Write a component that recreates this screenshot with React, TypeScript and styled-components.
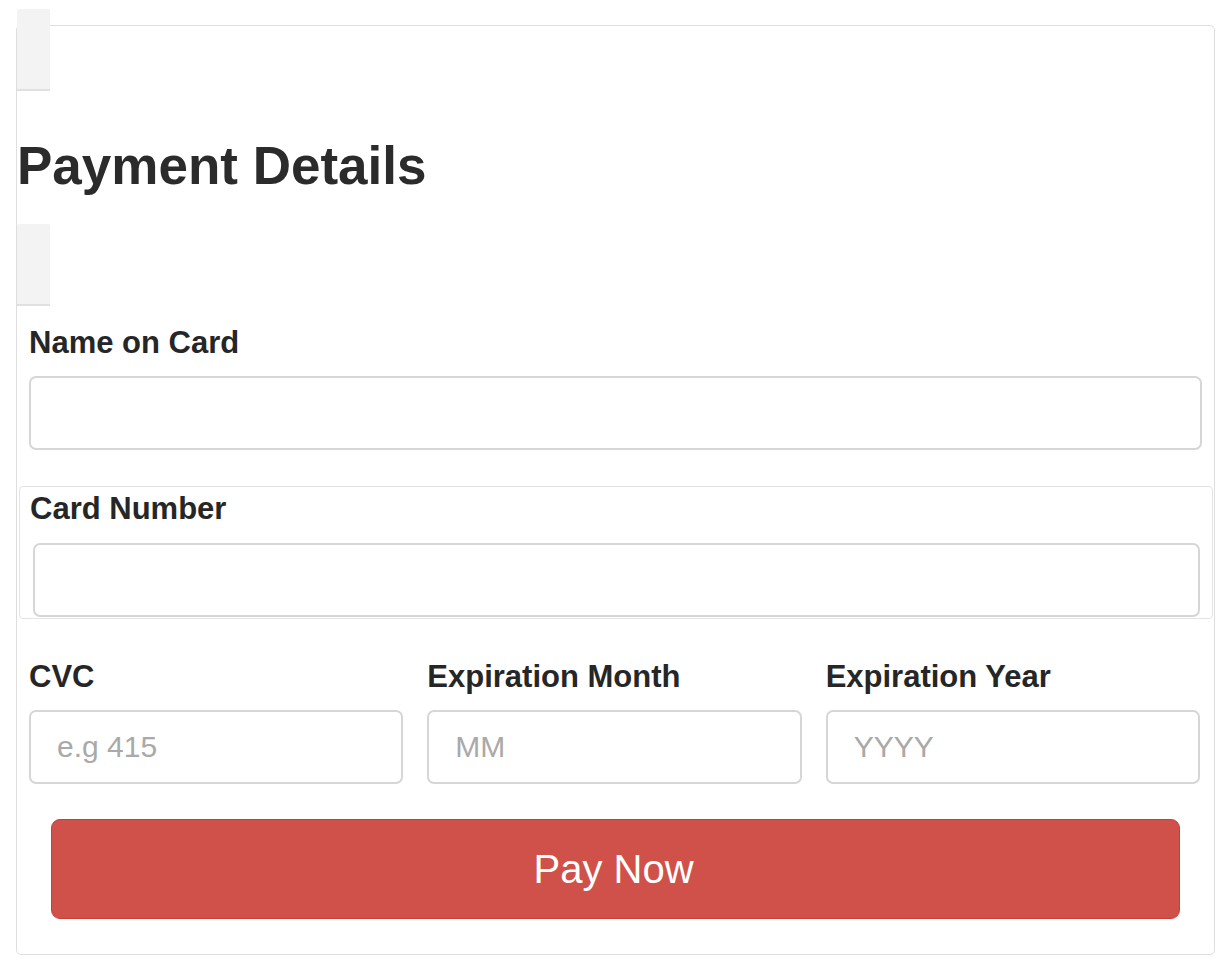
import React from "react";
import styled, { createGlobalStyle } from "styled-components";

const Global = createGlobalStyle`
  html, body { margin: 0; padding: 0; background: #ffffff; }
  body { font-family: "Liberation Sans", Arial, sans-serif; color: #333333; }
  * { box-sizing: border-box; }
`;

const Page = styled.div`
  padding: 25px 12px 14px 16px;
`;

const Panel = styled.div`
  width: 1199px;
  height: 930px;
  border: 1px solid #dedede;
  border-radius: 5px;
  background: #ffffff;
  display: flex;
  flex-direction: column;
`;

const Spacer = styled.div<{ $top: number }>`
  width: 33px;
  height: 82px;
  margin-top: ${(p) => p.$top}px;
  background: #f3f3f3;
  border-bottom: 2px solid #e0e0e0;
  border-radius: 2px 2px 0 0;
  flex: none;
`;

const Heading = styled.h2`
  margin: 46px 0 29px 0;
  font-size: 53px;
  line-height: 58px;
  font-weight: 700;
  color: #2b2b2b;
`;

const Form = styled.form`
  display: flex;
  flex-direction: column;
  padding: 20px 12px 0 12px;
`;

const Label = styled.label`
  display: block;
  font-size: 31px;
  line-height: 34px;
  font-weight: 700;
  color: #262626;
  margin-bottom: 16px;
`;

const Input = styled.input<{ $shift?: number }>`
  display: block;
  width: ${(p) => (p.$shift ? `calc(100% - ${p.$shift}px)` : "100%")};
  margin-left: ${(p) => p.$shift ?? 0}px;
  height: 74px;
  border: 2px solid #d6d6d6;
  border-radius: 7px;
  background: #ffffff;
  padding: 0 26px;
  font-family: "Liberation Sans", Arial, sans-serif;
  font-size: 30px;
  color: #555555;
  outline: none;
  &::placeholder { color: #a9a9a9; }
`;

const CardBox = styled.div`
  margin: 36px -11px 0 -10px;
  border: 1px solid #e4e4e4;
  border-radius: 4px;
  padding: 5px 12px 1px 10px;
  & ${Label} { margin-bottom: 17px; }
`;

const Row = styled.div`
  display: grid;
  grid-template-columns: repeat(3, 1fr);
  column-gap: 24px;
  margin: 41px 2px 0 0;
`;

const Field = styled.div`
  display: flex;
  flex-direction: column;
`;

const PayButton = styled.button`
  margin: 35px 22px 0 22px;
  height: 100px;
  border: 1px solid #c63f39;
  border-radius: 9px;
  background: #d0504a;
  color: #ffffff;
  font-family: "Liberation Sans", Arial, sans-serif;
  font-size: 40px;
  padding: 0 4px 0 0;
  cursor: pointer;
`;

export default function App() {
  return (
    <>
      <Global />
      <Page>
        <Panel>
          <Spacer $top={-17} />
          <Heading>Payment Details</Heading>
          <Spacer $top={0} />
          <Form onSubmit={(e) => e.preventDefault()}>
            <Field>
              <Label>Name on Card</Label>
              <Input type="text" />
            </Field>
            <CardBox>
              <Label>Card Number</Label>
              <Input type="text" $shift={3} />
            </CardBox>
            <Row>
              <Field>
                <Label>CVC</Label>
                <Input type="text" placeholder="e.g 415" />
              </Field>
              <Field>
                <Label>Expiration Month</Label>
                <Input type="text" placeholder="MM" />
              </Field>
              <Field>
                <Label>Expiration Year</Label>
                <Input type="text" placeholder="YYYY" />
              </Field>
            </Row>
            <PayButton type="submit">Pay Now</PayButton>
          </Form>
        </Panel>
      </Page>
    </>
  );
}
